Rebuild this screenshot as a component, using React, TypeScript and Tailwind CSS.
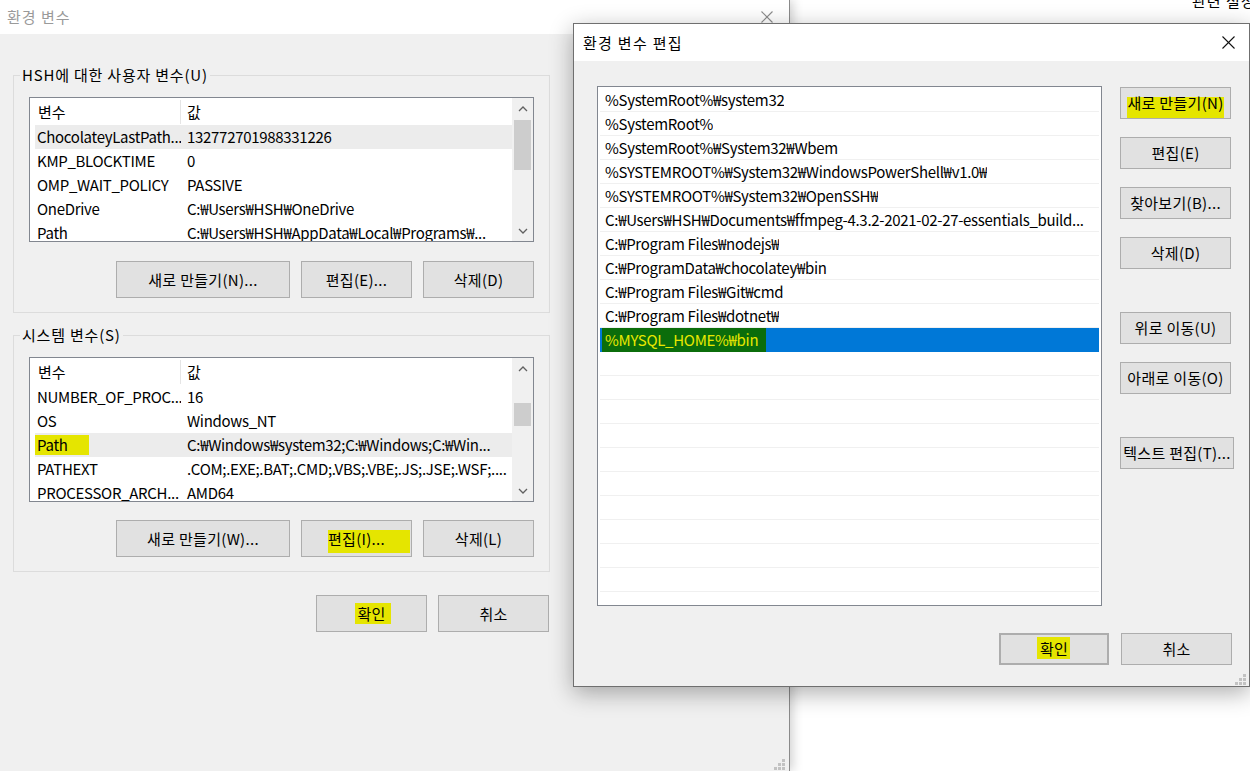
import React from "react";

type VarRow = { name: React.ReactNode; value: string; selected?: boolean };

const userVars: VarRow[] = [
  { name: "ChocolateyLastPath...", value: "132772701988331226", selected: true },
  { name: "KMP_BLOCKTIME", value: "0" },
  { name: "OMP_WAIT_POLICY", value: "PASSIVE" },
  { name: "OneDrive", value: "C:₩Users₩HSH₩OneDrive" },
  { name: "Path", value: "C:₩Users₩HSH₩AppData₩Local₩Programs₩..." },
];

const pathEntries = [
  "%SystemRoot%₩system32",
  "%SystemRoot%",
  "%SystemRoot%₩System32₩Wbem",
  "%SYSTEMROOT%₩System32₩WindowsPowerShell₩v1.0₩",
  "%SYSTEMROOT%₩System32₩OpenSSH₩",
  "C:₩Users₩HSH₩Documents₩ffmpeg-4.3.2-2021-02-27-essentials_build...",
  "C:₩Program Files₩nodejs₩",
  "C:₩ProgramData₩chocolatey₩bin",
  "C:₩Program Files₩Git₩cmd",
  "C:₩Program Files₩dotnet₩",
];

// yellow highlighter stroke drawn behind a piece of text
function Mark({ children, area }: { children: React.ReactNode; area: string }) {
  return (
    <span className="relative inline-block">
      <span className={`absolute bg-[#e5e500] ${area}`} />
      <span className="relative">{children}</span>
    </span>
  );
}

function WinButton({ children, className = "" }: { children: React.ReactNode; className?: string }) {
  return (
    <button className={`flex items-center justify-center bg-[#e1e1e1] border border-[#adadad] text-[15px] leading-[20px] tracking-[0.3px] text-black whitespace-nowrap ${className}`}>
      {children}
    </button>
  );
}

function Chevron({ down }: { down?: boolean }) {
  return (
    <svg width="10" height="6" viewBox="0 0 10 6">
      <polyline
        points={down ? "1,1 5,5 9,1" : "1,5 5,1 9,5"}
        fill="none"
        stroke="#606060"
        strokeWidth="1.3"
      />
    </svg>
  );
}

function Grip() {
  return (
    <svg width="12" height="12" viewBox="0 0 12 12">
      <rect x="9" y="1" width="3" height="3" fill="#c2c2c2" />
      <rect x="5" y="5" width="3" height="3" fill="#c2c2c2" />
      <rect x="9" y="5" width="3" height="3" fill="#c2c2c2" />
      <rect x="1" y="9" width="3" height="3" fill="#c2c2c2" />
      <rect x="5" y="9" width="3" height="3" fill="#c2c2c2" />
      <rect x="9" y="9" width="3" height="3" fill="#c2c2c2" />
    </svg>
  );
}

function CloseIcon({ size, color }: { size: number; color: string }) {
  return (
    <svg width={size} height={size} viewBox={`0 0 ${size} ${size}`}>
      <line x1="0.5" y1="0.5" x2={size - 0.5} y2={size - 0.5} stroke={color} strokeWidth="1.1" />
      <line x1={size - 0.5} y1="0.5" x2="0.5" y2={size - 0.5} stroke={color} strokeWidth="1.1" />
    </svg>
  );
}

function VarList({ rows, thumb }: { rows: VarRow[]; thumb: string }) {
  return (
    <div className="flex w-[505px] h-[145px] border border-[#828790] bg-white overflow-hidden">
      <div className="flex-1 flex flex-col pl-[5px] min-w-0 tracking-[-0.3px]">
        <div className="flex h-[27px] shrink-0 items-center tracking-normal">
          <div className="w-[146px] h-[24px] flex items-center pl-[3px] border-r border-[#e5e5e5]">변수</div>
          <div className="pl-[6px]">값</div>
        </div>
        {rows.map((r, i) => (
          <div key={i} className={`flex h-[24px] shrink-0 items-center ${r.selected ? "bg-[#ececec]" : ""}`}>
            <div className="w-[146px] pl-[2px] whitespace-nowrap overflow-hidden">{r.name}</div>
            <div className="flex-1 pl-[6px] whitespace-nowrap overflow-hidden">{r.value}</div>
          </div>
        ))}
      </div>
      <div className="w-[21px] shrink-0 flex flex-col bg-[#f0f0f0]">
        <div className="h-[21px] flex items-center justify-center">
          <Chevron />
        </div>
        <div className="flex-1">
          <div className={`mx-[2px] bg-[#cdcdcd] ${thumb}`} />
        </div>
        <div className="h-[21px] flex items-center justify-center">
          <Chevron down />
        </div>
      </div>
    </div>
  );
}

function GroupBox({ label, children, className = "" }: { label: string; children: React.ReactNode; className?: string }) {
  return (
    <fieldset className={`w-[536px] border border-[#dcdcdc] ${className}`}>
      <legend className="ml-[6px] px-[2px] leading-[20px] tracking-[0.8px]">{label}</legend>
      <div className="px-[15px] pb-[14px]">{children}</div>
    </fieldset>
  );
}

const systemVars: VarRow[] = [
  { name: "NUMBER_OF_PROC...", value: "16" },
  { name: "OS", value: "Windows_NT" },
  {
    name: <Mark area="-left-[2px] -right-[21px] -top-[2px] -bottom-[1px]">Path</Mark>,
    value: "C:₩Windows₩system32;C:₩Windows;C:₩Win...",
    selected: true,
  },
  { name: "PATHEXT", value: ".COM;.EXE;.BAT;.CMD;.VBS;.VBE;.JS;.JSE;.WSF;...." },
  { name: "PROCESSOR_ARCH...", value: "AMD64" },
];

export default function App() {
  const emptyRows = Array.from({ length: 12 });
  return (
    <div className="relative w-[1250px] h-[771px] overflow-hidden bg-white text-[15px] leading-[20px] text-black font-['Noto_Sans_CJK_KR',sans-serif]">
      {/* settings window content peeking out behind */}
      <span className="absolute left-[1192px] -top-[9px] whitespace-nowrap tracking-[1px]">관련 설정</span>

      {/* 환경 변수 (inactive, behind) */}
      <div className="relative flex flex-col w-[790px] h-[771px] border-r border-[#8a8a8a] shadow-[3px_0_10px_rgba(0,0,0,0.18)]">
        <div className="h-[34px] shrink-0 bg-white flex items-center justify-between pl-[7px] pr-[16px]">
          <span className="text-[#9a9a9a] tracking-[1px]">환경 변수</span>
          <CloseIcon size={12} color="#8c8c8c" />
        </div>
        <div className="flex-1 bg-[#f0f0f0] pl-[13px] pt-[31px]">
          <GroupBox label="HSH에 대한 사용자 변수(U)">
            <div className="mt-[12px]">
              <VarList rows={userVars} thumb="mt-[1px] h-[50px]" />
            </div>
            <div className="mt-[19px] flex justify-end gap-[11px]">
              <WinButton className="w-[174px] h-[37px]">새로 만들기(N)...</WinButton>
              <WinButton className="w-[111px] h-[37px]">편집(E)...</WinButton>
              <WinButton className="w-[111px] h-[37px]">삭제(D)</WinButton>
            </div>
          </GroupBox>
          <GroupBox label="시스템 변수(S)" className="mt-[12px]">
            <div className="mt-[12px]">
              <VarList rows={systemVars} thumb="mt-[24px] h-[23px]" />
            </div>
            <div className="mt-[18px] flex justify-end gap-[11px]">
              <WinButton className="w-[174px] h-[37px]">새로 만들기(W)...</WinButton>
              <WinButton className="w-[111px] h-[37px]">
                <Mark area="left-0 -right-[25px] top-[1px] -bottom-[4px]">편집(I)...</Mark>
              </WinButton>
              <WinButton className="w-[111px] h-[37px]">삭제(L)</WinButton>
            </div>
          </GroupBox>
          <div className="w-[536px] mt-[23px] flex justify-end gap-[11px]">
            <WinButton className="w-[111px] h-[37px]">
              <Mark area="-left-[2px] -right-[5px] -top-[1px] bottom-0">확인</Mark>
            </WinButton>
            <WinButton className="w-[111px] h-[37px]">취소</WinButton>
          </div>
        </div>
        <div className="absolute right-[4px] bottom-[1px]">
          <Grip />
        </div>
      </div>

      {/* 환경 변수 편집 (active window on top) */}
      <div className="absolute left-[573px] top-[23px] w-[677px] h-[664px] flex flex-col border border-[#6f6f6f] bg-[#f0f0f0] shadow-[0_6px_22px_rgba(0,0,0,0.32)]">
        <div className="h-[37px] shrink-0 bg-white flex items-center justify-between pl-[9px] pr-[14px]">
          <span className="tracking-[1.3px]">환경 변수 편집</span>
          <CloseIcon size={13} color="#111111" />
        </div>
        <div className="flex pl-[23px] pt-[25px]">
          <div className="w-[505px] h-[520px] border border-[#828790] bg-white pt-[1px] px-[2px] overflow-hidden tracking-[-0.3px]">
            {pathEntries.map((p) => (
              <div key={p} className="h-[24px] flex items-center pl-[5px] pr-[4px] border-b border-[#f0f0f0] whitespace-nowrap overflow-hidden">
                <span className="truncate">{p}</span>
              </div>
            ))}
            <div className="h-[24px] flex items-center bg-[#0078d7] pl-[2px]">
              <span className="h-[24px] flex items-center pl-[3px] pr-[8px] bg-[#0b6d0b] text-[#e8e800]">%MYSQL_HOME%₩bin</span>
            </div>
            {emptyRows.map((_, i) => (
              <div key={i} className="h-[24px] border-b border-[#f0f0f0]" />
            ))}
          </div>
          <div className="ml-[18px] mt-[1px] flex flex-col gap-[18px]">
            <WinButton className="w-[111px] h-[32px]">
              <Mark area="left-0 right-0 top-[4px] -bottom-[5px]">새로 만들기(N)</Mark>
            </WinButton>
            <WinButton className="w-[111px] h-[32px]">편집(E)</WinButton>
            <WinButton className="w-[111px] h-[32px]">찾아보기(B)...</WinButton>
            <WinButton className="w-[111px] h-[32px]">삭제(D)</WinButton>
            <WinButton className="w-[111px] h-[32px] mt-[25px]">위로 이동(U)</WinButton>
            <WinButton className="w-[111px] h-[32px]">아래로 이동(O)</WinButton>
            <WinButton className="w-[114px] h-[32px] mt-[25px]">텍스트 편집(T)...</WinButton>
          </div>
        </div>
        <div className="mt-[27px] flex justify-end gap-[12px] pr-[17px]">
          <WinButton className="w-[110px] h-[32px] border-2 border-[#0078d7]">
            <Mark area="-left-[3px] -right-[2px] -top-[2px] bottom-0">확인</Mark>
          </WinButton>
          <WinButton className="w-[111px] h-[32px]">취소</WinButton>
        </div>
        <div className="absolute right-[3px] bottom-[1px]">
          <Grip />
        </div>
      </div>
    </div>
  );
}
